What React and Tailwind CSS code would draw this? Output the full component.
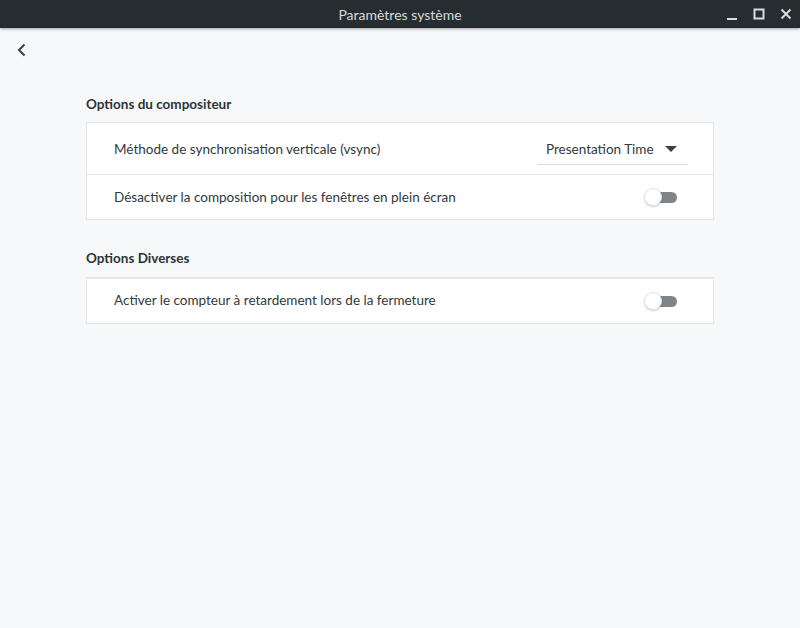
const font = "font-['Lato','Noto_Sans',sans-serif]"

function TitleBar() {
  return (
    <div className="relative flex h-7 items-center justify-center bg-[#252d31] shadow-[0_1px_3px_rgba(0,0,0,0.35)]">
      <span className={`${font} text-[14px] text-[#d6dadc]`}>Paramètres système</span>
      <div className="absolute right-0 top-0 flex h-7 items-center gap-[15px] pr-[8px]">
        <svg width="12" height="12" viewBox="0 0 12 12">
          <rect x="1" y="10" width="10" height="2" fill="#d8dcde" />
        </svg>
        <svg width="12" height="12" viewBox="0 0 12 12">
          <rect x="1.5" y="1.5" width="9" height="9" fill="none" stroke="#d8dcde" strokeWidth="2" />
        </svg>
        <svg width="12" height="12" viewBox="0 0 12 12">
          <path d="M1.5 1.5 L10.5 10.5 M10.5 1.5 L1.5 10.5" stroke="#d8dcde" strokeWidth="2" />
        </svg>
      </div>
    </div>
  )
}

function Toggle() {
  return (
    <div className="relative mr-[7px] h-[18px] w-[36px]">
      <div className="absolute left-[3px] top-[4px] h-[11px] w-[30px] rounded-full bg-[#7d8588]" />
      <div className="absolute left-0 top-0 h-[18px] w-[18px] rounded-full border border-[#e2e4e6] bg-white shadow-[0_1px_2px_rgba(0,0,0,0.2)]" />
    </div>
  )
}

function Row({ label, children, first, tall }) {
  return (
    <div
      className={`flex items-center justify-between pl-[27px] pr-[26px] ${tall ? 'h-[51px]' : 'h-[45px]'} ${first ? '' : 'border-t border-[#e6e8ea]'}`}
    >
      <span className={`${font} text-[13.5px] text-[#31393c]`}>{label}</span>
      {children}
    </div>
  )
}

function Section({ title, children }) {
  return (
    <section className="flex flex-col">
      <h2 className={`${font} mb-[8px] text-[13.5px] font-bold text-[#2c3438]`}>{title}</h2>
      <div className="border border-[#e3e5e8] bg-white">{children}</div>
    </section>
  )
}

export default function App() {
  return (
    <div className="flex h-[628px] w-[800px] flex-col bg-[#f7f8fa]">
      <TitleBar />
      <div className="px-[15px] pt-[14px]">
        <svg width="14" height="16" viewBox="0 0 14 16">
          <path d="M9.5 2.5 L4 8 L9.5 13.5" fill="none" stroke="#3a4245" strokeWidth="2" />
        </svg>
      </div>
      <div className="ml-[86px] mt-[36px] flex w-[628px] flex-col gap-[28px]">
        <Section title="Options du compositeur">
          <Row label="Méthode de synchronisation verticale (vsync)" first tall>
            <div className="-mr-[1px] mt-[2px] flex h-[30px] w-[150px] items-center justify-between border-b border-[#dadde0] pl-[8px] pr-[11px]">
              <span className={`${font} text-[13.5px] text-[#31393c]`}>Presentation Time</span>
              <svg width="12" height="8" viewBox="0 0 12 8">
                <path d="M0 1 L12 1 L6 7 Z" fill="#3a4245" />
              </svg>
            </div>
          </Row>
          <Row label="Désactiver la composition pour les fenêtres en plein écran">
            <Toggle />
          </Row>
        </Section>
        <Section title="Options Diverses">
          <Row label="Activer le compteur à retardement lors de la fermeture">
            <Toggle />
          </Row>
        </Section>
      </div>
    </div>
  )
}
